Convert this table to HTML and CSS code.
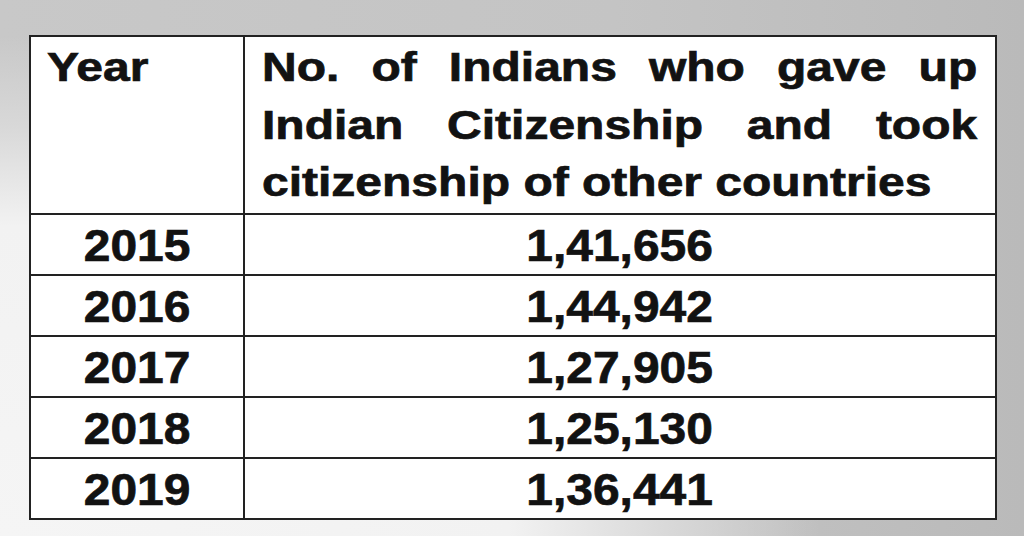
FILE: index.html
```html
<!DOCTYPE html>
<html>
<head>
<meta charset="utf-8">
<link rel="stylesheet" href="styles.css">
</head>
<body>
<div class="page">
  <table class="data">
    <colgroup>
      <col class="c1">
      <col class="c2">
    </colgroup>
    <tr class="head">
      <td class="hcell"><span class="wide">Year</span></td>
      <td class="hcell hcell-r"><span class="wide wide-block">No. of Indians who gave up Indian Citizenship and took citizenship of other countries</span></td>
    </tr>
    <tr><td><span class="num">2015</span></td><td><span class="num">1,41,656</span></td></tr>
    <tr><td><span class="num">2016</span></td><td><span class="num">1,44,942</span></td></tr>
    <tr><td><span class="num">2017</span></td><td><span class="num">1,27,905</span></td></tr>
    <tr><td><span class="num">2018</span></td><td><span class="num">1,25,130</span></td></tr>
    <tr><td><span class="num">2019</span></td><td><span class="num">1,36,441</span></td></tr>
  </table>
</div>
</body>
</html>
```
FILE: styles.css
```css
html, body {
  margin: 0;
  padding: 0;
}
body {
  width: 1024px;
  height: 536px;
  overflow: hidden;
  background:
    radial-gradient(ellipse 820px 500px at 0% 100%, #f5f5f5 0%, #f2f2f2 62%, #d8d8d8 82%, rgba(200,200,200,0) 100%),
    linear-gradient(to right, #c8c8c8 0%, #c4c4c4 60%, #bababa 100%);
}
.page {
  padding: 35px 0 0 29px;
}
.data {
  border-collapse: collapse;
  table-layout: fixed;
  width: 966px;
  background: #fff;
  font-family: "Liberation Sans", Arial, sans-serif;
  font-weight: bold;
  color: #121212;
  -webkit-text-stroke: 0.7px #121212;
}
.c1 { width: 214px; }
.c2 { width: 752px; }
.data td {
  border: 2px solid #222;
  padding: 2px 0 0 0;
  height: 57px;
  line-height: 57px;
  font-size: 45px;
  text-align: center;
  white-space: nowrap;
}
.num {
  display: inline-block;
  transform: scaleX(1.065);
}
.head td.hcell {
  vertical-align: top;
  font-size: 40px;
  line-height: 57.5px;
  height: auto;
  padding: 2px 0 1px 16px;
  text-align: left;
  white-space: normal;
}
.head td.hcell-r {
  padding-left: 17px;
}
.wide {
  display: inline-block;
  transform: scaleX(1.2);
  transform-origin: left top;
}
.wide-block {
  display: block;
  width: 596px;
  text-align: justify;
}
```
